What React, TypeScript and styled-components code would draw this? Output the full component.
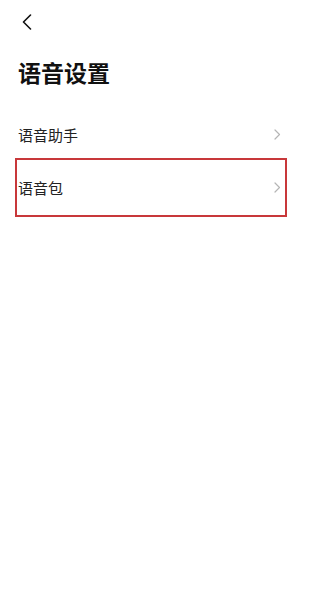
import React from 'react';
import styled, { createGlobalStyle } from 'styled-components';

const GlobalStyle = createGlobalStyle`
  html, body {
    margin: 0;
    padding: 0;
    background: #ffffff;
  }
  body {
    font-family: "Noto Sans CJK SC", "Noto Sans", sans-serif;
  }
`;

const items = [
  { label: '语音助手', highlighted: false },
  { label: '语音包', highlighted: true },
];

const App = () => {
  return (
    <>
      <GlobalStyle />
      <Page>
        <TopBar>
          <BackBtn>
            <svg width="10" height="16" viewBox="0 0 10 16" fill="none">
              <path
                d="M8.5 1 L1.5 8 L8.5 15"
                stroke="#111"
                strokeWidth="1.6"
                strokeLinecap="round"
                strokeLinejoin="round"
              />
            </svg>
          </BackBtn>
        </TopBar>
        <Title>语音设置</Title>
        <List>
          {items.map((item) => (
            <Row key={item.label} $highlighted={item.highlighted}>
              <Label>{item.label}</Label>
              <svg width="7" height="11" viewBox="0 0 7 11" fill="none">
                <path
                  d="M1 1 L5.5 5.5 L1 10"
                  stroke="#b5b5b5"
                  strokeWidth="1.2"
                  strokeLinecap="round"
                  strokeLinejoin="round"
                />
              </svg>
            </Row>
          ))}
        </List>
      </Page>
    </>
  );
};

const Page = styled.div`
  width: 310px;
  height: 592px;
  box-sizing: border-box;
  padding: 0 26px 0 18px;
  background: #ffffff;
`;

const TopBar = styled.div`
  height: 44px;
  display: flex;
  align-items: center;
`;

const BackBtn = styled.div`
  display: flex;
  align-items: center;
  margin-left: 4px;
  margin-top: -1px;
  cursor: pointer;
`;

const Title = styled.h1`
  margin: 12px 0 0;
  height: 32px;
  line-height: 32px;
  font-size: 23px;
  font-weight: 700;
  color: #111111;
`;

const List = styled.div`
  margin-top: 20px;
  display: flex;
  flex-direction: column;
`;

const Row = styled.div<{ $highlighted: boolean }>`
  height: 53px;
  display: flex;
  align-items: center;
  justify-content: space-between;
  padding-right: 3px;
  outline: ${({ $highlighted }) => ($highlighted ? '2px solid #c8383a' : 'none')};
  outline-offset: 1px;
  cursor: pointer;
`;

const Label = styled.span`
  font-size: 15px;
  color: #222222;
`;

export default App;
